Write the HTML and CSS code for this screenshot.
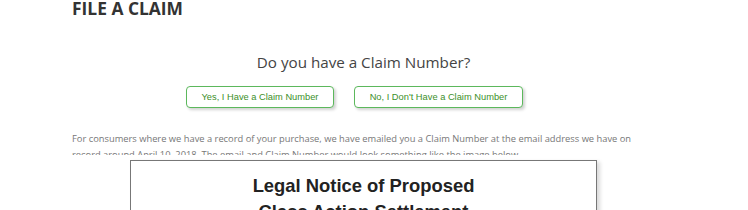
FILE: index.html
```
<!DOCTYPE html>
<html lang="en">
<head>
    <meta charset="UTF-8">
    <meta name="viewport" content="width=device-width, initial-scale=1.0">
    <title>File a Claim</title>
    <link rel="stylesheet" href="styles.css">
</head>
<body>
    <div class="container">
        <h1 class="page-title">FILE A CLAIM</h1>

        <h2 class="question">Do you have a Claim Number?</h2>

        <div class="choice-row">
            <a href="#" class="choice-button">Yes, I Have a Claim Number</a>
            <a href="#" class="choice-button">No, I Don't Have a Claim Number</a>
        </div>

        <p class="intro">
            For consumers where we have a record of your purchase, we have emailed you a Claim Number at the email address we have on
            record around April 10, 2018. The email and Claim Number would look something like the image below.
        </p>

        <div class="sample-notice">
            <p class="notice-title">Legal Notice of Proposed<br>Class Action Settlement</p>
        </div>
    </div>
</body>
</html>
```

FILE: styles.css
```
* {
    margin: 0;
    padding: 0;
    box-sizing: border-box;
}

body {
    background-color: #ffffff;
    font-family: "Open Sans", sans-serif;
    color: #444444;
    overflow: hidden;
}

.container {
    width: 583px;
    margin-left: 72px;
}

.page-title {
    font-size: 17.4px;
    font-weight: 700;
    line-height: 17px;
    color: #333333;
}

.question {
    margin-top: 34px;
    font-size: 15.2px;
    font-weight: 400;
    line-height: 22px;
    text-align: center;
    color: #444444;
}

.choice-row {
    display: flex;
    gap: 20px;
    margin-top: 13px;
    padding-left: 114px;
}

.choice-button {
    display: inline-flex;
    align-items: center;
    justify-content: center;
    height: 22px;
    border: 1px solid #5cb85c;
    border-radius: 4px;
    font-family: "Liberation Sans", Arial, sans-serif;
    font-size: 9.3px;
    color: #3c8f2a;
    text-decoration: none;
    background-color: #ffffff;
    box-shadow: 2px 2px 3px rgb(0 0 0 / 0.18);
}

.choice-button:first-child {
    width: 148px;
}

.choice-button:last-child {
    width: 169px;
}

.intro {
    margin-top: 23px;
    height: 24px;
    overflow: hidden;
    font-size: 9.33px;
    line-height: 16px;
    color: #777777;
}

.sample-notice {
    width: 467px;
    height: 60px;
    margin-top: 5px;
    margin-left: 58px;
    border: 1px solid #777777;
    border-bottom: none;
    box-shadow: 3px 2px 4px rgb(0 0 0 / 0.15);
    text-align: center;
    padding-top: 12px;
}

.notice-title {
    font-family: "Liberation Sans", Arial, sans-serif;
    font-size: 18.4px;
    font-weight: 700;
    line-height: 26px;
    color: #222222;
}
```
